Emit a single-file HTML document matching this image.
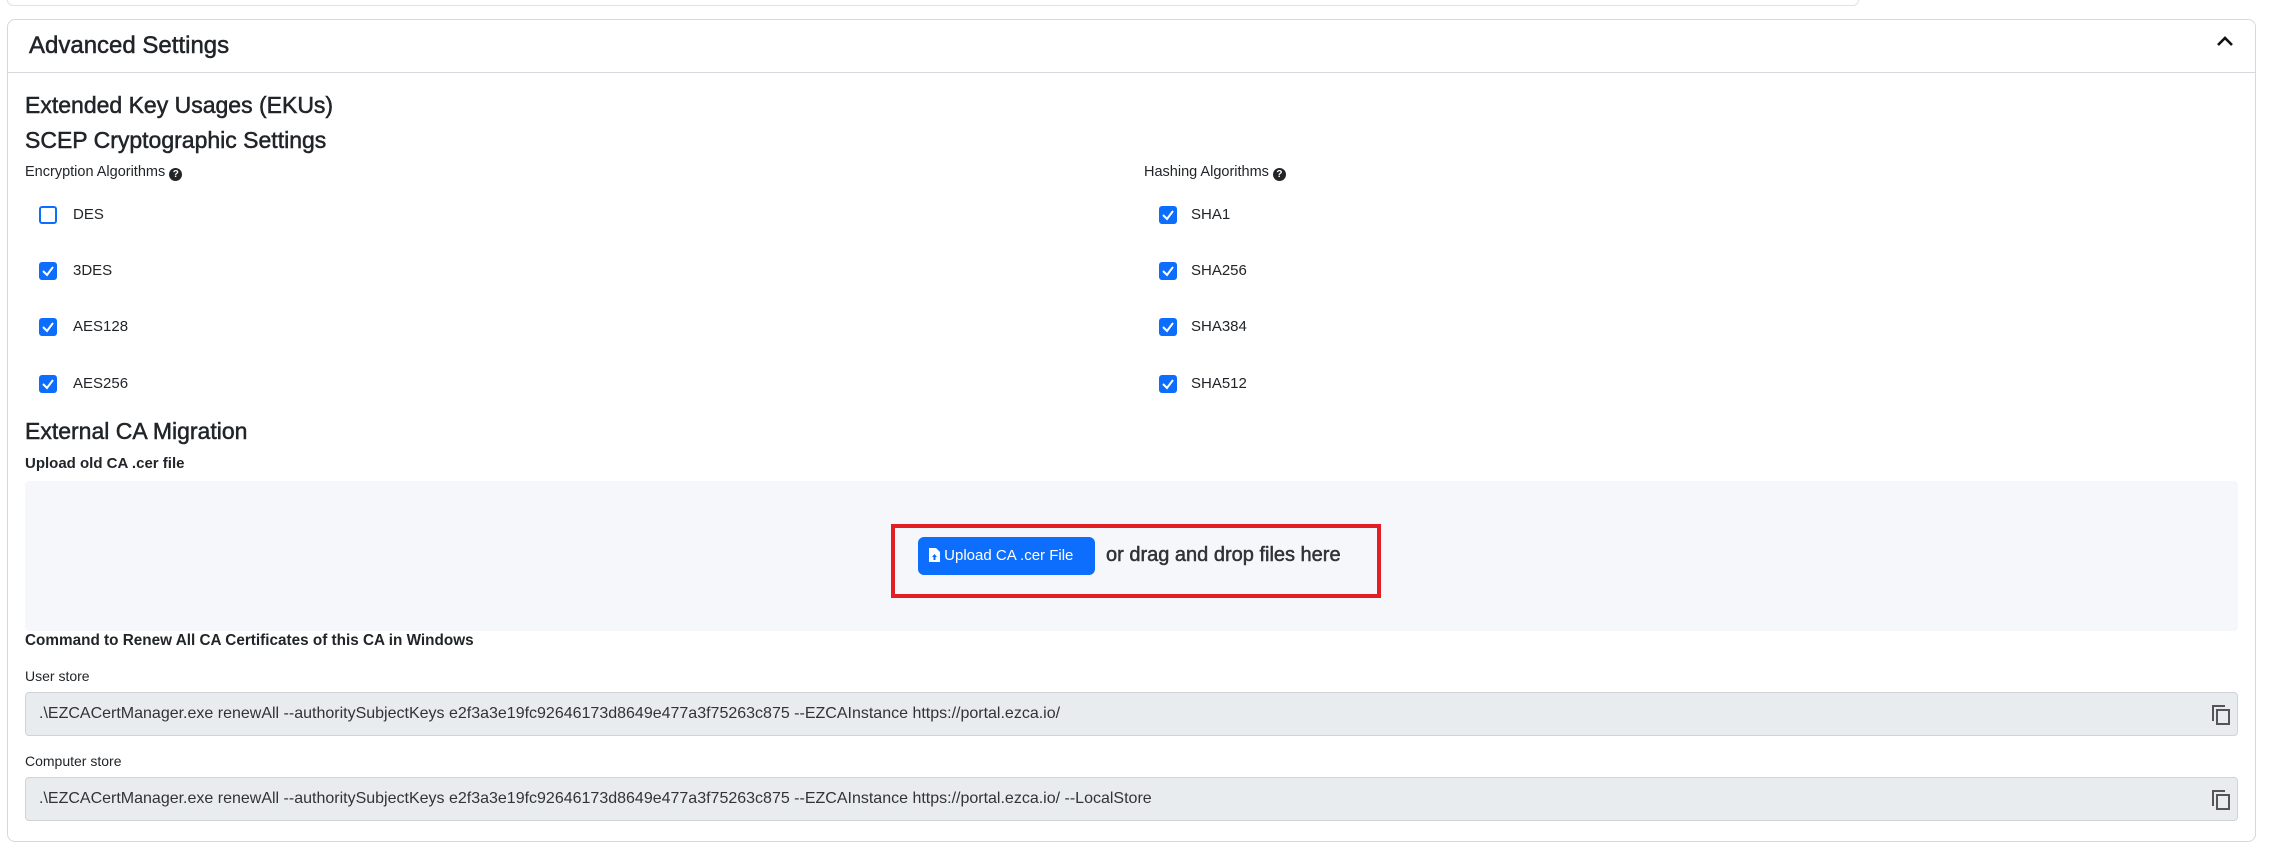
<!DOCTYPE html>
<html><head><meta charset="utf-8"><style>
*{box-sizing:border-box;margin:0;padding:0}
body{width:2271px;height:855px;background:#fff;font-family:"Liberation Sans",sans-serif;color:#212529;position:relative;overflow:hidden}
.a{position:absolute;white-space:nowrap}
.m{-webkit-text-stroke:0.5px #212529}
.cb{position:absolute;width:18px;height:18px;border-radius:3px;background:#0d6efd}
.cb svg{position:absolute;left:2px;top:2px}
.cb.off{background:#fff;border:2px solid #0d6efd}
.lbl{position:absolute;font-size:15px;line-height:18px}
.inp{position:absolute;left:25px;width:2213px;height:44px;background:#e9ecef;border:1px solid #ced4da;border-radius:4px;font-size:16px;line-height:42px;padding-left:13px;color:#333}
.cp{position:absolute;right:6px;top:11px}
</style></head><body>
<div class="a" style="left:7px;top:-10px;width:1852px;height:16px;border:1px solid #dee2e6;border-radius:6px"></div>
<div class="a" style="left:7px;top:19px;width:2249px;height:823px;border:1px solid #d5d8dc;border-radius:8px"></div>
<div class="a" style="left:8px;top:72px;width:2247px;height:1px;background:#d5d8dc"></div>
<div class="a m" style="left:29px;top:32px;font-size:24px;line-height:28px">Advanced Settings</div>
<svg class="a" style="left:2216px;top:35px" width="18" height="12" viewBox="0 0 18 12"><path d="M2 10 L9 3 L16 10" fill="none" stroke="#111" stroke-width="2.6"/></svg>
<div class="a m" style="left:25px;top:91px;font-size:23px;line-height:28px">Extended Key Usages (EKUs)</div>
<div class="a m" style="left:25px;top:126px;font-size:23px;line-height:28px">SCEP Cryptographic Settings</div>
<div class="a" style="left:25px;top:164px;font-size:14.5px;line-height:16px">Encryption Algorithms <span style="display:inline-block;width:13px;height:13px;border-radius:50%;background:#212529;color:#fff;font-size:10px;line-height:13px;text-align:center;font-weight:bold;vertical-align:-1px">?</span></div>
<div class="a" style="left:1144px;top:164px;font-size:14.5px;line-height:16px">Hashing Algorithms <span style="display:inline-block;width:13px;height:13px;border-radius:50%;background:#212529;color:#fff;font-size:10px;line-height:13px;text-align:center;font-weight:bold;vertical-align:-1px">?</span></div>

<div class="cb off" style="left:39px;top:206px"></div><div class="lbl" style="left:73px;top:206px">DES</div>
<div class="cb" style="left:39px;top:262px"><svg width="14" height="14"><path d="M2 7 L6 11 L12 3" fill="none" stroke="#fff" stroke-width="2"/></svg></div><div class="lbl" style="left:73px;top:262px">3DES</div>
<div class="cb" style="left:39px;top:318px"><svg width="14" height="14"><path d="M2 7 L6 11 L12 3" fill="none" stroke="#fff" stroke-width="2"/></svg></div><div class="lbl" style="left:73px;top:318px">AES128</div>
<div class="cb" style="left:39px;top:375px"><svg width="14" height="14"><path d="M2 7 L6 11 L12 3" fill="none" stroke="#fff" stroke-width="2"/></svg></div><div class="lbl" style="left:73px;top:375px">AES256</div>

<div class="cb" style="left:1159px;top:206px"><svg width="14" height="14"><path d="M2 7 L6 11 L12 3" fill="none" stroke="#fff" stroke-width="2"/></svg></div><div class="lbl" style="left:1191px;top:206px">SHA1</div>
<div class="cb" style="left:1159px;top:262px"><svg width="14" height="14"><path d="M2 7 L6 11 L12 3" fill="none" stroke="#fff" stroke-width="2"/></svg></div><div class="lbl" style="left:1191px;top:262px">SHA256</div>
<div class="cb" style="left:1159px;top:318px"><svg width="14" height="14"><path d="M2 7 L6 11 L12 3" fill="none" stroke="#fff" stroke-width="2"/></svg></div><div class="lbl" style="left:1191px;top:318px">SHA384</div>
<div class="cb" style="left:1159px;top:375px"><svg width="14" height="14"><path d="M2 7 L6 11 L12 3" fill="none" stroke="#fff" stroke-width="2"/></svg></div><div class="lbl" style="left:1191px;top:375px">SHA512</div>

<div class="a m" style="left:25px;top:417px;font-size:23px;line-height:28px">External CA Migration</div>
<div class="a" style="left:25px;top:455px;font-size:15px;line-height:18px;font-weight:bold">Upload old CA .cer file</div>
<div class="a" style="left:25px;top:481px;width:2213px;height:150px;background:#f5f7fb;border-radius:4px"></div>
<div class="a" style="left:891px;top:524px;width:490px;height:74px;border:4px solid #e31e24"></div>
<div class="a" style="left:918px;top:537px;width:177px;height:38px;background:#0d6efd;border-radius:6px;color:#fff;font-size:15px;line-height:38px;padding-left:11px"><svg width="11" height="14" style="vertical-align:-2px"><path d="M0 0 H7 L11 4 V14 H0Z" fill="#fff"/><path d="M5.5 6 L8 9 H6.5 V12 H4.5 V9 H3Z" fill="#0d6efd"/></svg> Upload CA .cer File</div>
<div class="a m" style="left:1106px;top:543px;font-size:20px;line-height:24px;-webkit-text-stroke:0.5px #333;color:#333">or drag and drop files here</div>
<div class="a" style="left:25px;top:632px;font-size:15.3px;line-height:18px;font-weight:bold">Command to Renew All CA Certificates of this CA in Windows</div>
<div class="a" style="left:25px;top:668px;font-size:14px;line-height:16px">User store</div>
<div class="inp" style="top:692px">.\EZCACertManager.exe renewAll --authoritySubjectKeys e2f3a3e19fc92646173d8649e477a3f75263c875 --EZCAInstance https://portal.ezca.io/<svg class="cp" width="20" height="22" viewBox="0 0 20 22"><path d="M2 17 V2 H14" fill="none" stroke="#555" stroke-width="2"/><rect x="6" y="6" width="12" height="14" fill="none" stroke="#555" stroke-width="2"/></svg></div>
<div class="a" style="left:25px;top:753px;font-size:14px;line-height:16px">Computer store</div>
<div class="inp" style="top:777px">.\EZCACertManager.exe renewAll --authoritySubjectKeys e2f3a3e19fc92646173d8649e477a3f75263c875 --EZCAInstance https://portal.ezca.io/ --LocalStore<svg class="cp" width="20" height="22" viewBox="0 0 20 22"><path d="M2 17 V2 H14" fill="none" stroke="#555" stroke-width="2"/><rect x="6" y="6" width="12" height="14" fill="none" stroke="#555" stroke-width="2"/></svg></div>
</body></html>
